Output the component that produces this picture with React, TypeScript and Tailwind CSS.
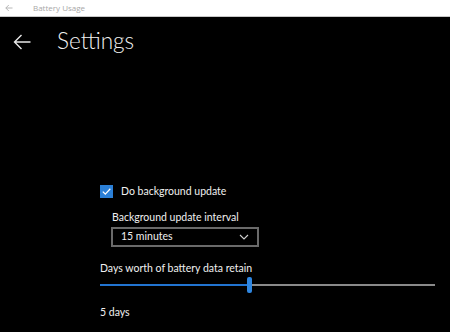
import React from "react";

export default function App() {
  return (
    <div
      className="w-[450px] h-[332px] bg-black overflow-hidden flex flex-col"
      style={{ fontFamily: 'Lato, "Open Sans", sans-serif' }}
    >
      {/* title bar */}
      <div className="h-[16px] bg-white border-b border-[#c8c8c8] flex items-center shrink-0 box-content">
        <svg width="8" height="8" viewBox="0 0 8 8" className="ml-[5px]">
          <path d="M7.5 4H0.8M3.8 1L0.8 4L3.8 7" stroke="#b0b0b0" strokeWidth="0.9" fill="none" />
        </svg>
        <span
          className="ml-[20px] text-[8px] leading-none text-[#a8a8a8]"
          style={{ fontFamily: '"Open Sans", sans-serif' }}
        >
          Battery Usage
        </span>
      </div>

      {/* header */}
      <div className="flex items-center h-[50px] shrink-0">
        <svg width="18" height="16" viewBox="0 0 18 16" className="ml-[13px]">
          <path d="M17.5 8H1.5M8.5 1L1.5 8L8.5 15" stroke="#e8e8e8" strokeWidth="1.4" fill="none" />
        </svg>
        <span className="ml-[26px] text-[22.5px] font-light leading-none text-[#f2f2f2] -mt-[2px]">Settings</span>
      </div>

      {/* content */}
      <div className="pl-[100px] pt-[117px] flex flex-col">
        <div className="flex items-center h-[14px]">
          <div className="w-[13px] h-[13px] bg-[#2b7fd6] flex items-center justify-center">
            <svg width="11" height="11" viewBox="0 0 11 11">
              <path d="M1.8 5.6L4.3 8.1L9.3 2.8" stroke="#ffffff" strokeWidth="1.3" fill="none" />
            </svg>
          </div>
          <span className="ml-[8px] text-[10.5px] leading-none text-[#f0f0f0]">Do background update</span>
        </div>

        <div className="ml-[12px] mt-[14px] text-[10.5px] leading-none text-[#f0f0f0]">Background update interval</div>

        <div className="ml-[11px] mt-[4px] w-[148px] h-[20px] border-2 border-[#6a6a6a] flex items-center justify-between px-[8px]">
          <span className="text-[10.5px] leading-none text-[#f0f0f0]">15 minutes</span>
          <svg width="10" height="6" viewBox="0 0 10 6">
            <path d="M1 1L5 5L9 1" stroke="#d0d0d0" strokeWidth="1.1" fill="none" />
          </svg>
        </div>

        <div className="mt-[16px] text-[10.5px] leading-none text-[#f0f0f0]">Days worth of battery data retain</div>

        <div className="relative mt-[4px] w-[335px] h-[16px] flex items-center">
          <div className="h-[2px] w-[148px] bg-[#2274d0]" />
          <div className="h-[2px] flex-1 bg-[#8a8a8a]" />
          <div className="absolute left-[147px] top-0 w-[5px] h-[16px] rounded-[2px] bg-[#2f86e0]" />
        </div>

        <div className="mt-[14px] text-[10.5px] leading-none text-[#f0f0f0]">5 days</div>
      </div>
    </div>
  );
}
